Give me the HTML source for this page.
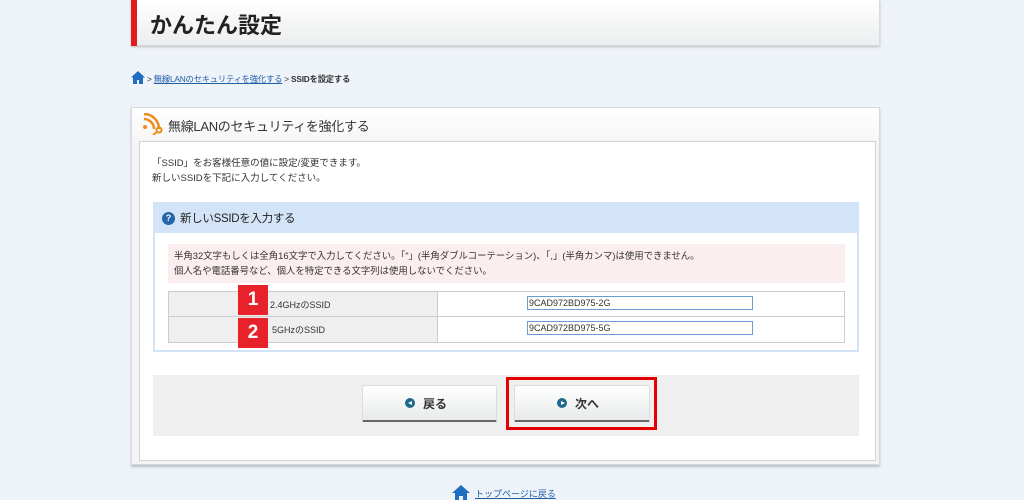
<!DOCTYPE html>
<html><head><meta charset="utf-8"><style>
*{margin:0;padding:0;box-sizing:border-box}
body{width:1024px;height:500px;overflow:hidden;background:#eef3f9;font-family:"Liberation Sans","Noto Sans CJK JP",sans-serif;color:#333;position:relative}
.a{position:absolute}
.ic{width:10px;height:10px;border-radius:50%;background:#1d6a8c}
.ic:after{content:"";position:absolute;left:3.5px;top:2.5px;border-left:4px solid #fff;border-top:2.5px solid transparent;border-bottom:2.5px solid transparent}
.ic.l:after{left:2.5px;border-left:none;border-right:4px solid #fff}
</style></head><body>
<div class="a" style="left:131px;top:0;width:749px;height:46px;background:linear-gradient(#fff,#eceeef);border:1px solid #d8dbdf;border-top:none;box-shadow:0 1px 2px #bbb"></div>
<div class="a" style="left:131px;top:0;width:6px;height:46px;background:#e01c1c"></div>
<div class="a" style="left:150px;top:8px;font-size:22px;font-weight:bold;color:#222">かんたん設定</div>
<svg class="a" style="left:131px;top:71px" width="14" height="13" viewBox="0 0 14 13"><path d="M7 0L0 6.5h2V13h4V9h2v4h4V6.5h2z" fill="#1e6fc0"/></svg>
<div class="a" style="left:147px;top:73px;font-size:8.3px;color:#333;letter-spacing:-0.2px">&gt; <span style="color:#1f5fa8;text-decoration:underline">無線LANのセキュリティを強化する</span> &gt; <b>SSIDを設定する</b></div>
<div class="a" style="left:131px;top:107px;width:749px;height:358px;background:linear-gradient(#fff,#f4f4f4 40px);border:1px solid #d6dade;box-shadow:0 2px 2px #b8c2cc"></div>
<svg class="a" style="left:142px;top:113px" width="22" height="22" viewBox="0 0 22 22"><g fill="none" stroke="#f08a1c" stroke-width="2.5"><path d="M2 6a10 10 0 0 1 10 10"/><path d="M2 1a15 15 0 0 1 15 15"/></g><circle cx="3" cy="14" r="2" fill="#f08a1c"/><circle cx="17" cy="17" r="2.5" fill="none" stroke="#f08a1c" stroke-width="2"/><path d="M15 19l-4 3" stroke="#f08a1c" stroke-width="2"/></svg>
<div class="a" style="left:168px;top:116px;font-size:13px;color:#333;letter-spacing:-0.3px">無線LANのセキュリティを強化する</div>
<div class="a" style="left:139px;top:141px;width:737px;height:320px;background:#fff;border:1px solid #d0d4d8"></div>
<div class="a" style="left:152px;top:156px;font-size:9.5px;line-height:15px;color:#333">「SSID」をお客様任意の値に設定/変更できます。<br>新しいSSIDを下記に入力してください。</div>
<div class="a" style="left:153px;top:202px;width:706px;height:150px;border:2px solid #d4e4f8;background:#fff"></div>
<div class="a" style="left:153px;top:202px;width:706px;height:31px;background:#d4e4f8"></div>
<div class="a" style="left:162px;top:212px;width:13px;height:13px;border-radius:50%;background:#2566a8;color:#fff;font-size:9px;font-weight:bold;text-align:center;line-height:13px">?</div>
<div class="a" style="left:180px;top:210px;font-size:11.5px;color:#222;letter-spacing:-0.3px">新しいSSIDを入力する</div>
<div class="a" style="left:168px;top:244px;width:677px;height:39px;background:#fbeeee"></div>
<div class="a" style="left:174px;top:248px;font-size:9.4px;line-height:15px;color:#333">半角32文字もしくは全角16文字で入力してください。「"」(半角ダブルコーテーション)、「,」(半角カンマ)は使用できません。<br>個人名や電話番号など、個人を特定できる文字列は使用しないでください。</div>
<div class="a" style="left:168px;top:291px;width:677px;height:52px;border:1px solid #ccc;background:#fff"></div>
<div class="a" style="left:169px;top:292px;width:269px;height:50px;background:#efefef;border-right:1px solid #ccc"></div>
<div class="a" style="left:168px;top:316px;width:677px;height:1px;background:#ccc"></div>
<div class="a" style="left:270px;top:298px;font-size:9px">2.4GHzのSSID</div>
<div class="a" style="left:272px;top:323px;font-size:9px">5GHzのSSID</div>
<div class="a" style="left:238px;top:285px;width:30px;height:30px;background:#e8222a;color:#fff;font-weight:bold;font-size:19px;text-align:center;line-height:30px">1</div>
<div class="a" style="left:238px;top:318px;width:30px;height:30px;background:#e8222a;color:#fff;font-weight:bold;font-size:19px;text-align:center;line-height:30px">2</div>
<div class="a" style="left:527px;top:296px;width:226px;height:14px;border:1px solid #6b9dd0;font-size:9px;line-height:12px;padding-left:1px">9CAD972BD975-2G</div>
<div class="a" style="left:527px;top:321px;width:226px;height:14px;border:1px solid #6b9dd0;font-size:9px;line-height:12px;padding-left:1px">9CAD972BD975-5G</div>
<div class="a" style="left:153px;top:375px;width:706px;height:61px;background:#efefef"></div>
<div class="a" style="left:362px;top:385px;width:135px;height:37px;background:linear-gradient(#fff,#e8eaeb);border:1px solid #ddd;border-bottom:2px solid #666;border-radius:2px"></div>
<div class="a" style="left:514px;top:385px;width:136px;height:37px;background:linear-gradient(#fff,#e8eaeb);border:1px solid #ddd;border-bottom:2px solid #666;border-radius:2px"></div>
<div class="a" style="left:506px;top:377px;width:151px;height:53px;border:3px solid #e60000"></div>
<div class="a ic l" style="left:405px;top:398px"></div>
<div class="a" style="left:423px;top:395px;font-size:12px;font-weight:bold">戻る</div>
<div class="a ic" style="left:557px;top:398px"></div>
<div class="a" style="left:575px;top:395px;font-size:12px;font-weight:bold">次へ</div>
<svg class="a" style="left:452px;top:485px" width="18" height="15" viewBox="0 0 18 15"><path d="M9 0L0 8h3v7h4v-4h4v4h4V8h3z" fill="#1e6fc0"/></svg>
<div class="a" style="left:475px;top:487px;font-size:9px;color:#1f5fa8;text-decoration:underline">トップページに戻る</div>
</body></html>
